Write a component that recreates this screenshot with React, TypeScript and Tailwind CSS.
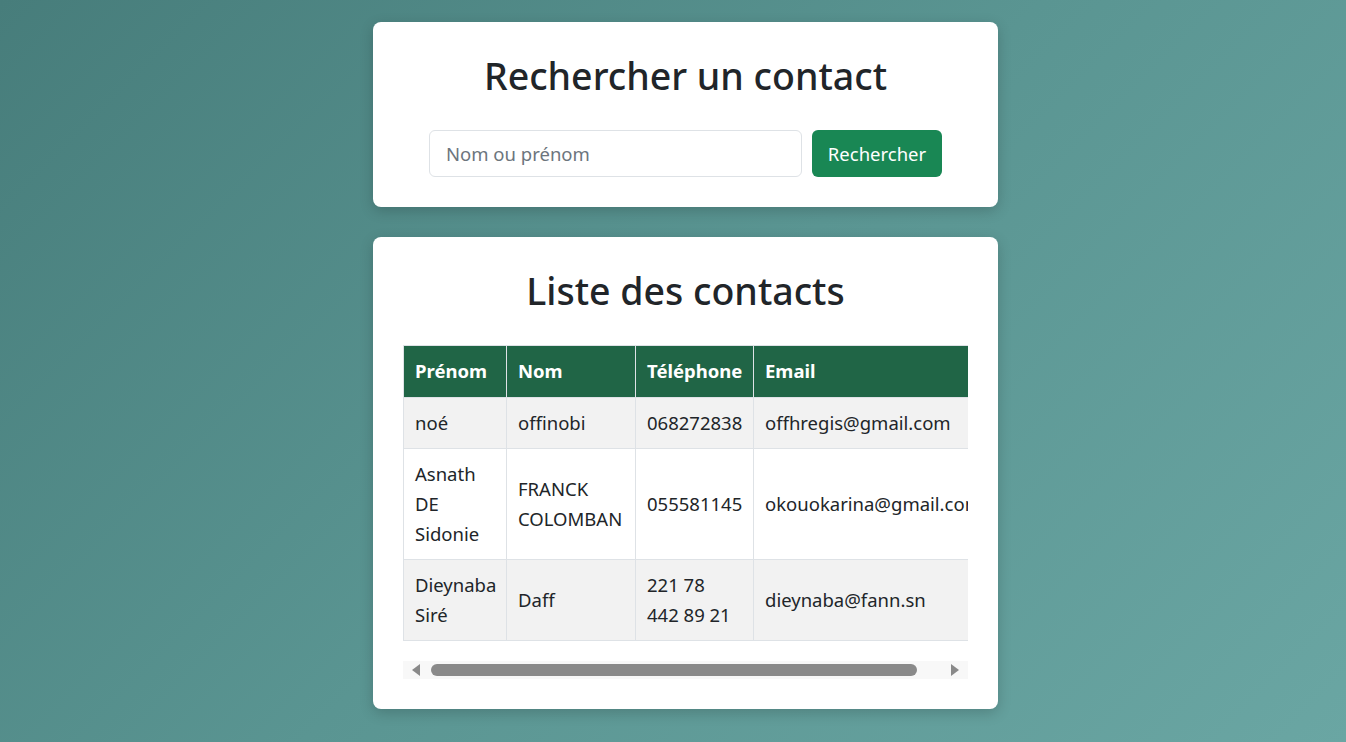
const contacts = [
  { prenom: 'noé', nom: 'offinobi', tel: '068272838', email: 'offhregis@gmail.com' },
  { prenom: 'Asnath DE Sidonie', nom: 'FRANCK COLOMBAN', tel: '055581145', email: 'okouokarina@gmail.com' },
  { prenom: 'Dieynaba Siré', nom: 'Daff', tel: '221 78 442 89 21', email: 'dieynaba@fann.sn' },
]

const App = () => {
  return (
    <div
      className='min-h-screen w-full flex flex-col items-center pl-[25px] pt-[22px] pb-[33px] gap-[30px] bg-[linear-gradient(135deg,#477d7b_0%,#5a9592_50%,#6aa6a3_100%)] text-[#212529]'
      style={{ fontFamily: '"Noto Sans", "Open Sans", sans-serif' }}
    >
      <div className='w-[625px] bg-white rounded-lg p-[30px] shadow-[0_4px_14px_rgba(0,0,0,0.18)]'>
        <h1 className='text-center text-[37.5px] leading-[48px] font-medium mb-[30px]'>Rechercher un contact</h1>
        <div className='flex justify-center gap-[10px]'>
          <input
            type='text'
            placeholder='Nom ou prénom'
            className='w-[373px] h-[47px] px-4 text-[18.5px] border border-[#dee2e6] rounded-md placeholder:text-[#6c757d] outline-none'
          />
          <button className='w-[130px] h-[47px] bg-[#198754] text-white text-[18.5px] rounded-md'>Rechercher</button>
        </div>
      </div>

      <div className='w-[625px] bg-white rounded-lg p-[30px] shadow-[0_4px_14px_rgba(0,0,0,0.18)]'>
        <h1 className='text-center text-[37.5px] leading-[48px] font-medium mb-[30px]'>Liste des contacts</h1>
        <div className='w-full overflow-hidden'>
          <table className='table-fixed w-[600px] border-collapse text-[18.5px] leading-[30px] mb-5'>
            <colgroup>
              <col className='w-[103px]' />
              <col className='w-[129px]' />
              <col className='w-[118px]' />
              <col className='w-[250px]' />
            </colgroup>
            <thead>
              <tr className='bg-[#206546] text-white'>
                <th className='text-left font-bold px-[11px] pt-[10px] pb-[11px] border border-[#dee2e6]'>Prénom</th>
                <th className='text-left font-bold px-[11px] pt-[10px] pb-[11px] border border-[#dee2e6]'>Nom</th>
                <th className='text-left font-bold px-[11px] pt-[10px] pb-[11px] border border-[#dee2e6] whitespace-nowrap'>Téléphone</th>
                <th className='text-left font-bold px-[11px] pt-[10px] pb-[11px] border border-[#dee2e6]'>Email</th>
              </tr>
            </thead>
            <tbody>
              {contacts.map((c, i) => (
                <tr key={i} className={i % 2 === 0 ? 'bg-[#f2f2f2]' : 'bg-white'}>
                  <td className='px-[11px] py-[10px] border border-[#dee2e6] align-middle'>{c.prenom}</td>
                  <td className='px-[11px] py-[10px] border border-[#dee2e6] align-middle'>{c.nom}</td>
                  <td className='px-[11px] py-[10px] border border-[#dee2e6] align-middle'>
                    <div className='max-w-[90px]'>{c.tel}</div>
                  </td>
                  <td className='px-[11px] py-[10px] border border-[#dee2e6] align-middle whitespace-nowrap'>{c.email}</td>
                </tr>
              ))}
            </tbody>
          </table>
          <div className='h-[18px] bg-[#f8f8f8] flex items-center px-[9px] gap-[11px]'>
            <svg width='8' height='12' viewBox='0 0 8 12'><polygon points='8,0 8,12 0,6' fill='#8a8a8a' /></svg>
            <div className='flex-1 h-[12px] pr-[23px]'>
              <div className='h-full w-full bg-[#8a8a8a] rounded-full' />
            </div>
            <svg width='8' height='12' viewBox='0 0 8 12'><polygon points='0,0 0,12 8,6' fill='#8a8a8a' /></svg>
          </div>
        </div>
      </div>
    </div>
  )
}

export default App
